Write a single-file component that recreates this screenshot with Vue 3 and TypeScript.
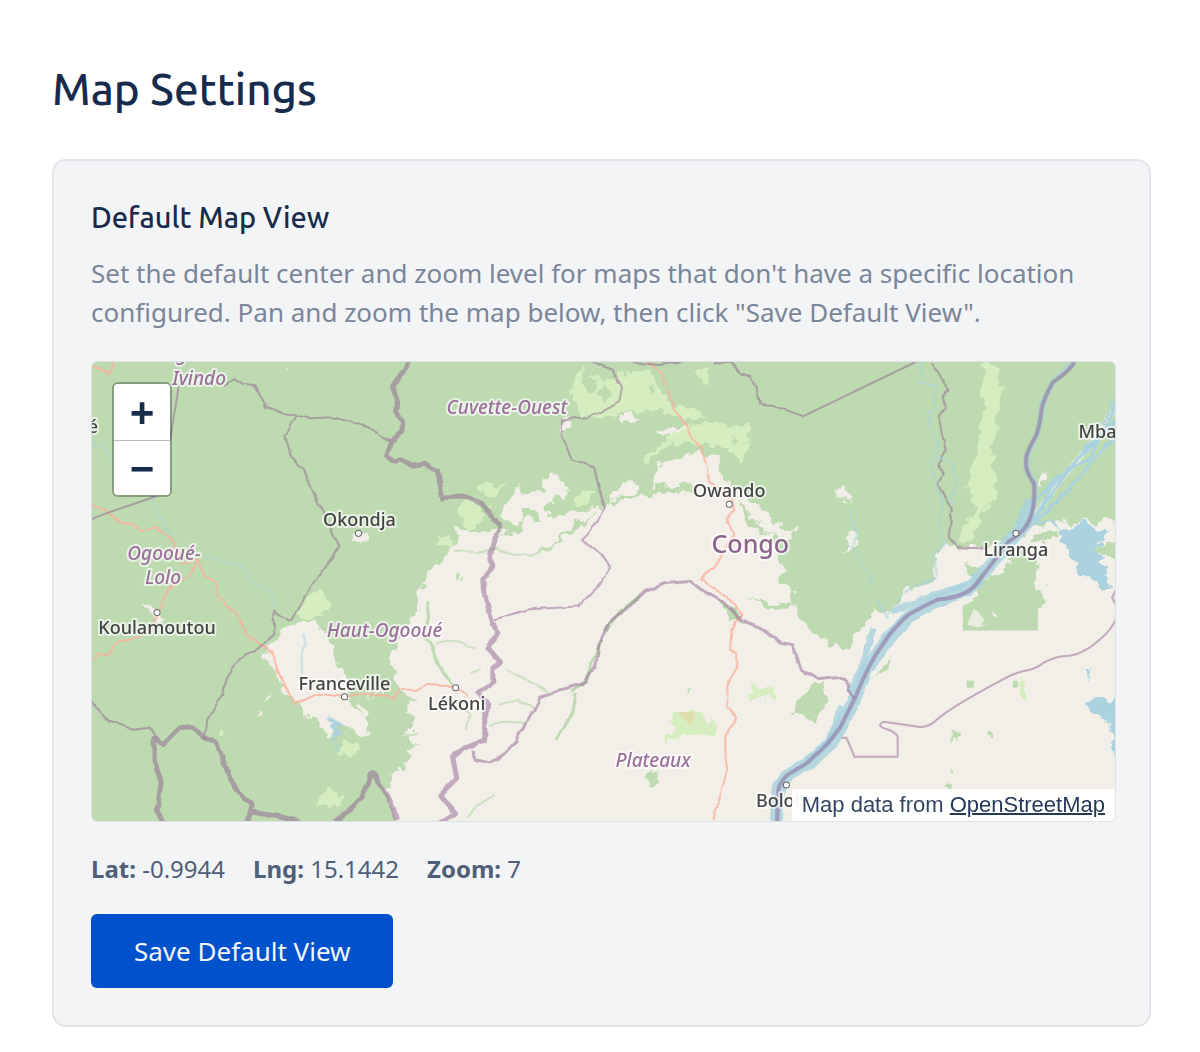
<script setup lang="ts">
import { ref } from 'vue'

interface Place { name: string; x: number; y: number; dot?: [number, number] }

const lat = ref(-0.9944)
const lng = ref(15.1442)
const zoom = ref(7)

const towns: Place[] = [
  { name: 'Okondja', x: 360, y: 527, dot: [359, 534] },
  { name: 'Koulamoutou', x: 158, y: 634, dot: [158, 613] },
  { name: 'Franceville', x: 345, y: 690, dot: [345, 697] },
  { name: 'Lékoni', x: 457, y: 710, dot: [456, 688] },
  { name: 'Owando', x: 729, y: 498, dot: [729, 505] },
  { name: 'Liranga', x: 1015, y: 557, dot: [1015, 534] },
  { name: 'Bolobo', x: 786, y: 807, dot: [786, 785] },
  { name: 'Mbandaka', x: 1123, y: 439 },
  { name: 'é', x: 94, y: 434 },
]

const regions: Place[] = [
  { name: 'Ogooué-', x: 200, y: 361 },
  { name: 'Ivindo', x: 200, y: 386 },
  { name: 'Cuvette-Ouest', x: 507, y: 415 },
  { name: 'Ogooué-', x: 165, y: 561 },
  { name: 'Lolo', x: 164, y: 585 },
  { name: 'Haut-Ogooué', x: 385, y: 637 },
  { name: 'Plateaux', x: 653, y: 767 },
]
</script>

<template>
  <main class="page">
    <h1>Map Settings</h1>
    <section class="card">
      <h2>Default Map View</h2>
      <p class="intro">
        Set the default center and zoom level for maps that don't have a specific location
        configured. Pan and zoom the map below, then click "Save Default View".
      </p>

      <div class="map">
        <svg class="tiles" viewBox="92 363 1023 458" preserveAspectRatio="xMidYMid slice" role="img" aria-label="Map of Gabon and Congo">
          <defs>
            <filter id="ragged" x="-5%" y="-5%" width="110%" height="110%">
              <feTurbulence type="fractalNoise" baseFrequency="0.09" numOctaves="3" seed="4" />
              <feDisplacementMap in="SourceGraphic" scale="15" xChannelSelector="R" yChannelSelector="G" />
            </filter>
            <filter id="wavy" filterUnits="userSpaceOnUse" x="80" y="350" width="1050" height="490">
              <feTurbulence type="fractalNoise" baseFrequency="0.1" numOctaves="1" seed="9" />
              <feDisplacementMap in="SourceGraphic" scale="5" xChannelSelector="R" yChannelSelector="G" />
            </filter>
          </defs>

          <rect x="92" y="363" width="1023" height="458" fill="#bddab1" />

          <!-- open savanna -->
          <g fill="#f2efe9" filter="url(#ragged)">
            <path d="M396 840V818L388 790 395 770 412 757 405 747 408 730 400 707 402 693 395 670 388 662 397 647 405 627 422 610 415 597 423 587 428 573 442 560 452 550 458 540 455 527 478 533 492 533 505 532 522 530 505 520 502 510 512 497 518 487 523 495 542 493 545 480 558 475 568 487 565 500 578 513 595 510 606 507 613 493 620 483 637 485 643 493 653 487 653 470 673 460 697 452 718 458 717 470 727 483 747 500 767 513 780 527 797 532 787 538 773 538 777 553 787 573 778 578 793 590 790 603 800 617 813 633 827 642 847 652 855 633 875 612 892 612 905 592 933 580 933 560 945 543 955 548 982 547 1012 538 1030 528 1055 521 1072 523 1130 520V840Z" />
            <path d="M270 645L293 623 317 622 337 653 340 672 388 680 384 694 358 697 368 712 368 738 345 725 328 738 310 715 295 700 283 688 275 670 263 660Z" />
            <path d="M657 428L676 430 683 426 684 438 662 436ZM620 418l12-4 8 5-8 7-12-4ZM562 420l10-2 1 10-12 2ZM145 605l14 4 8 12-12 0ZM352 536l16-2 2 9-14-1ZM1037 478l6-6 5 8-10 7ZM266 697l6-3-4 8ZM259 710l3 2-1 6-4-1ZM285 371l3 0 0 4-3 0Z" />
            <path d="M842 484l-4 4 1 8 10 7-1-4-5-7 3-6ZM850 532l-1 14-5 5 12-1 2-7-3-11Z" />
          </g>

          <!-- gallery forest inside the savanna -->
          <g fill="#bddab1" filter="url(#ragged)">
            <path d="M740 500L762 531 785 540 762 533 750 528 741 512ZM555 496l12 4 12 12-26 8-9-9ZM522 508l15 4 3 10-18-2ZM506 524l18-2 4 10-20 2ZM600 514L575 528 550 550 538 555 555 542 575 522ZM610 500l34-11 48-2 2 5-48 2-34 9Z" />
            <path d="M812 684l11-6 2 26-6 14-14 5-12-12 5-14ZM652 771l6 4-6 12-6-8ZM688 688l8 0-5 4ZM340 660l12-4 36-6 5 20 2 20-34 6 0 20-12-18 4-20-14-8Z" />
            <path d="M719 601l18 9 6 14-14-7ZM883 663l7-6-2 11-12 9ZM951 732l7 0-1 9-6 2ZM987 728l4 6 1 6-5-3ZM948 766l4 4-3 4ZM945 785l6 2-6 6ZM457 572l5 3-3 3Z" />
            <path d="M962 563L978 570 982 580 1004 571 1018 548 1035 558 1036 590 1044 597 1037 607 977 607 972 580Z" />
            <path d="M1025 540l20 4 10-6 3-8-20 4ZM1096 548l20-8v20l-14-2ZM1044 590l-3 12-4 0V590Z" />
            <path d="M745 594l14 8 30 2 5 6-30-2Z" />
            <path d="M388 690l26 8-8 14 8 12-6 10 10 12-12 8-6 14-14 0Z" />
          </g>
          <path d="M962 606L985 596H1037V631H962Z" fill="#bddab1" />
          <path d="M966 625l7-16 5 4 6 8-4 4 6 1-10 2ZM991 611l5 5 2 3-6-3Z" fill="#f2efe9" opacity=".8" />
          <g fill="none" stroke="#bddab1" stroke-width="3" filter="url(#wavy)">
            <path d="M427 602L429 618 424 635 433 648 437 661 443 672 454 686M576 694L573 712 564 728 556 740M602 640L592 662 587 680 572 692M640 596L620 612 605 632" stroke-width="3" />
            <path d="M469 818L477 806 495 795M505 670L530 682 553 696M490 725L505 722 525 723M455 550L475 554 495 549 515 555 530 556 550 548" stroke-width="2" opacity=".7" />
            <path d="M435 645L455 640 475 650M470 673L481 670M467 730L470 715 465 708M402 736L420 733M500 706L518 700 535 708" stroke-width="2" opacity=".7" />
          </g>

          <!-- grassland -->
          <g fill="#d6eebf" filter="url(#ragged)">
            <path d="M983 363H994L1001 390 996 425 992 455 994 500 982 515 970 542 957 540 965 525 976 510 966 490 977 450 982 410 983 385Z" />
            <path d="M687 427L705 424 748 427 745 446 752 430 746 452 738 465 732 448 700 446 690 441 660 451 648 466 643 460 655 447 668 440Z" />
            <path d="M573 372l6 8 20-5 6 10 22-12 24 2 12 20 12 11 24 5 8 7-20 2-30-8-22-1-20 6-18 2-18-3-4-20Z" />
            <path d="M696 373l12 0 0 12-8 2ZM460 505l16-6 12 14-5 12-14 4-10-10ZM474 488l16-5 12 5-6 11-17-4ZM445 534l10 8-4 8-12-5ZM582 488l16 4-8 10-12 6-6-4ZM575 370l7-3 3 14-14 18Z" />
            <path d="M672 715L677 712H700L713 724 717 737H688L660 743 670 732ZM750 684l22 4 2 13-14-4-10 3Z" />
            <path d="M298 615l5-18 20-7 9 12-9 14-18 3ZM343 740l16 3 3 9-12 6-8-6ZM318 795l10-8 15 10-4 12-18-2ZM221 725l4 5-1 9-4-1ZM1018 678l5 2 2 20-5-2Z" />
          </g>
          <g fill="#bddab1" filter="url(#ragged)">
            <path d="M583 378l10 2 5 8-8 6-7-5ZM605 385l4 10-5 8-5-6ZM733 435l4 8-5 3ZM648 385l5 3-4 4ZM672 395l4 8-4 2ZM668 447l14 1-8 3Z" />
          </g>
          <path d="M678 712H695L691 727Z" fill="#dfddab" />
          <path d="M966 681h7v7h-7ZM1012 681h5v7h-5Z" fill="#bddab1" />

          <!-- lakes and rivers -->
          <g fill="#aad3df" filter="url(#ragged)">
            <path d="M1058 533L1080 523 1105 532 1098 548 1100 562 1108 580 1112 588 1096 590 1090 577 1078 575 1069 555Z" />
            <path d="M1087 705L1098 694 1112 703 1122 678V766L1110 745 1112 725 1090 714ZM1084 670l4 0-1 12-2 1Z" />
          </g>
          <g fill="none" stroke="#aad3df" stroke-linejoin="round">
            <path d="M1073 363L1052 383 1042 403 1036 437 1026 457V470L1034 485 1032 510 1025 527 1008 542" stroke-width="6" opacity=".6" />
            <path d="M1030 500L1021 528 994 560 970 588 937 601 908 617 883 645 866 670 855 697 840 727 832 742 810 762 788 775 778 788 776 821" stroke-width="13" opacity=".85" filter="url(#wavy)" />
            <path d="M873 628L862 665 848 692M840 706L829 741 804 760M892 612L937 594 967 584" stroke-width="6" opacity=".8" filter="url(#wavy)" />
            <path d="M1112 412L1090 445 1060 480 1035 515" stroke="#f2efe9" stroke-width="6" opacity=".6" />
            <g stroke-width="3" filter="url(#wavy)">
              <path d="M1118 395L1105 430 1084 450 1062 478 1042 508 1022 533M1118 418L1100 438 1074 462 1050 488 1034 520M1118 434L1089 464 1070 488 1048 510 1026 530M1100 435L1088 460 1056 478 1036 500" />
              <path d="M1030 524L1050 522 1058 530M1112 400L1102 425 1118 430" stroke-width="2" />
            </g>
            <g stroke-width="2" opacity=".6" filter="url(#wavy)">
              <path d="M917 363L923 376 918 384 936 387 932 400 936 410 928 414 930 430 938 450 930 464 937 490 942 505 938 525 945 545 933 555 935 578 905 592 885 620" />
              <path d="M938 458L952 465 956 485 948 500 957 507M852 508L850 522 857 534 851 548 860 560 872 585M876 600L885 617" />
              <path d="M92 444L105 447 113 460M153 497L158 514 172 537M205 559L220 560 245 568 250 580 272 592M272 592L275 608" opacity=".7" />
              <path d="M304 633L306 645 302 660 303 673M328 715L342 726 332 737 340 752M334 718L336 740" />
            </g>
            <path d="M328 719l12 5-8 2 9 8-8 1" stroke-width="3" />
          </g>

          <!-- roads -->
          <g fill="none" stroke="#f9b29c" stroke-width="2" opacity=".85" stroke-linejoin="round" filter="url(#wavy)">
            <path d="M648 363L662 375 668 392 674 411 686 425 692 440 701 449 706 465 709 484 730 494 734 510 727 520 733 535 722 557 701 580 721 594 735 605 741 616 731 630 730 650 736 655 736 668 727 685 727 706 736 718 725 736 725 756 727 770 713 821" />
            <path d="M92 505L106 511 122 523 133 524 142 531 157 529 173 540 183 565 199 560 205 575 215 582 220 597 228 608 238 613 246 634 260 644 272 652 280 675 295 703 306 700 318 694 344 697 368 693 393 698 400 690 419 690 429 684 440 687 455 687 469 697" />
            <path d="M199 562L188 577 168 591 160 612 152 630 138 638 115 644 110 655 101 653 94 661M92 368L104 370 112 374 115 363" />
          </g>

          <!-- province borders -->
          <g fill="none" stroke="#916490" stroke-width="2" opacity=".5" stroke-linejoin="round">
            <path d="M180 385L171 440M157 497L110 513 92 520" />
            <g filter="url(#wavy)">
              <path d="M225 387L235 380 243 385 256 386 267 408 285 414 310 419 333 418 345 421 368 428 390 441M297 417L286 437 292 458 303 470 340 547 312 587 292 622 274 612 275 635 255 652 240 660 228 678 222 695 208 720 206 738" />
              <path d="M92 702L110 721 135 730 150 728 158 738" />
              <path d="M632 363L658 366 685 363M714 363L731 364 739 373 750 378 757 392 760 406 774 407 803 417M591 363L611 370 622 388 619 403 600 414 588 418 562 420 562 437 572 461 594 468 602 500 605 509 595 526 582 540 602 556 610 568 600 585 578 607 527 610 495 620" />
              <path d="M931 363L948 391 942 398 945 408 938 418 945 453 938 465 942 475 937 485 945 500 951 510 948 538 957 548 984 549" />
              <path d="M473 750L477 760 490 763 498 760 515 743 522 730 537 705 540 698 560 690 583 684 596 665 599 645 612 620 630 606 645 592 665 584 690 582 701 590 718 600 729 608 741 621 758 628 781 643 792 645 801 670 817 679 835 677 846 680 847 690 854 697" stroke-width="3" />
            </g>
            <path d="M803 417L915 363M841 738l5 0 8 19h43v-20q-2-5-12-8t-2-7l35 5q10 1 18-7 15-13 62-38 15-9 26-11 10-1 19-8 12-7 25-7 17-2 37-22 12-12 13-29h10M1115 590l-4 8 4 8" />
          </g>

          <!-- national borders -->
          <g fill="none" stroke="#916490" stroke-width="5" opacity=".5" stroke-linejoin="round">
            <g filter="url(#wavy)">
              <path d="M412 360L403 373 393 388 398 403 397 413 403 423 402 433 392 442 387 457 395 463 402 460 413 467 425 465 438 472 443 500 450 497 468 497 483 505 500 527 492 548 490 560 493 567 483 580 484 593 492 620 497 633 488 648 500 662 493 670 493 683 478 693 490 705 485 713 485 740 465 748 453 757 457 778 440 795 455 813 440 823" />
              <path d="M164 823L158 810 162 782 155 760 155 738 164 744 180 728 192 727 205 737 217 743 230 775 235 788 253 805 248 823M253 812L270 815 281 817 300 822M336 822L347 813 360 800 373 773 385 791 392 805 398 820" />
            </g>
            <path d="M1073 363Q1070 371 1052 383 1044 397 1041 408 1038 434 1033 440 1025 454 1025 461 1024 472 1033 484 1035 512 1025 527 1018 536 1008 542L975 585Q966 597 937 600 926 605 908 615 892 629 882 645 868 664 855 697L840 727Q826 747 813 757L807 763 787 775Q779 783 778 790L777 823" stroke="#865f92" stroke-width="4" opacity="1" />
          </g>

          <g class="labels">
            <template v-for="t in towns" :key="t.name">
              <circle v-if="t.dot" :cx="t.dot[0]" :cy="t.dot[1]" r="3" />
              <text :x="t.x" :y="t.y">{{ t.name }}</text>
            </template>
            <text v-for="r in regions" :key="r.name + r.y" class="region" :x="r.x" :y="r.y">{{ r.name }}</text>
            <text class="country" x="750" y="554">Congo</text>
          </g>
        </svg>

        <div class="zoom">
          <button type="button" aria-label="Zoom in" @click="zoom++">+</button>
          <button type="button" aria-label="Zoom out" @click="zoom--">−</button>
        </div>
        <div class="attribution">Map data from <a href="#">OpenStreetMap</a></div>
      </div>

      <div class="position">
        <span><strong>Lat:</strong> {{ lat }}</span>
        <span><strong>Lng:</strong> {{ lng }}</span>
        <span><strong>Zoom:</strong> {{ zoom }}</span>
      </div>
      <button type="button" class="save">Save Default View</button>
    </section>
  </main>
</template>

<style>
body {
  background: #fff;
}
</style>

<style scoped>
.page {
  padding: 62px 49px 24px 52px;
  color: #172b4d;
  font-family: "Noto Sans", sans-serif;
}
h1,
h2 {
  margin: 0;
  font-family: Ubuntu, "Noto Sans", sans-serif;
  font-weight: 500;
}
h1 {
  font-size: 44px;
  line-height: 54px;
}
.card {
  margin-top: 43px;
  padding: 36px 33px 37px 37px;
  border: 2px solid #e2e4e9;
  border-radius: 14px;
  background: #f3f4f6;
}
h2 {
  font-size: 29px;
  line-height: 40px;
}
.intro {
  margin: 17px 0 29px;
  color: #7a869a;
  font-size: 26px;
  line-height: 39px;
}
.map {
  position: relative;
  height: 459px;
  overflow: hidden;
  border: 1px solid #dfe1e6;
  border-radius: 6px;
}
.tiles {
  display: block;
  width: 100%;
  height: 100%;
}
.labels text {
  fill: #444;
  stroke: rgba(255, 255, 255, 0.65);
  stroke-width: 4px;
  stroke-linejoin: round;
  paint-order: stroke;
  font-size: 18px;
  font-weight: 500;
  text-anchor: middle;
}
.labels .region {
  fill: #9b709b;
  font-size: 19px;
  font-style: italic;
}
.labels .country {
  fill: #8b648b;
  font-size: 25px;
}
.labels circle {
  fill: #fff;
  stroke: #666;
  stroke-width: 1px;
}
.zoom {
  position: absolute;
  top: 20px;
  left: 20px;
  border: 2px solid rgba(0, 0, 0, 0.28);
  border-radius: 6px;
  background-clip: padding-box;
}
.zoom button {
  display: block;
  width: 56px;
  height: 54px;
  padding: 8px 0 0;
  border: 0;
  border-radius: 0 0 4px 4px;
  background: #fff;
  color: #172b4d;
  font: bold 42px/46px "Liberation Mono", monospace;
}
.zoom button:first-child {
  height: 57px;
  border-bottom: 1px solid #bbb;
  border-radius: 4px 4px 0 0;
}
.attribution {
  position: absolute;
  right: 0;
  bottom: 0;
  padding: 0 10px;
  background: rgba(255, 255, 255, 0.95);
  color: #344563;
  font: 22px/32px "Liberation Sans", sans-serif;
}
.attribution a {
  color: #253858;
  text-decoration-thickness: 2px;
}
.position {
  display: flex;
  gap: 28px;
  margin: 30px 0 29px;
  color: #505f79;
  font-size: 24px;
  line-height: 33px;
}
.save {
  display: block;
  height: 74px;
  padding: 0 43px;
  border: 0;
  border-radius: 6px;
  background: #0052cc;
  color: #f4f5f7;
  font: 26px/36px "Noto Sans", sans-serif;
}
</style>
